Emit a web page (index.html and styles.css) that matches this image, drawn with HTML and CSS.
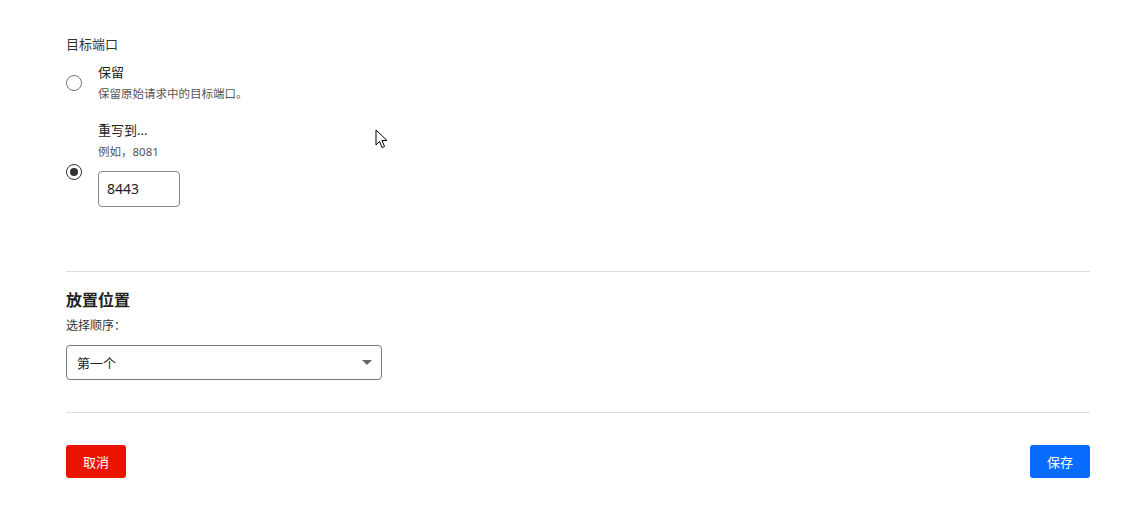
FILE: index.html
```html
<!DOCTYPE html>
<html>
<head>
  <meta charset="utf-8">
  <meta name="viewport" content="width=device-width">
  <link rel="stylesheet" href="styles.css">
  <title>目标端口</title>
</head>
<body>
  <div class="page">
    <div class="field-label">目标端口</div>

    <div class="option">
      <span class="radio"></span>
      <div class="option-body">
        <div class="option-title">保留</div>
        <div class="option-desc">保留原始请求中的目标端口。</div>
      </div>
    </div>

    <div class="option option-second">
      <span class="radio checked"></span>
      <div class="option-body">
        <div class="option-title">重写到...</div>
        <div class="option-desc">例如，8081</div>
        <div class="port-input">8443</div>
      </div>
    </div>

    <hr class="divider first">

    <div class="section-title">放置位置</div>
    <div class="select-label">选择顺序：</div>
    <div class="select">
      <span>第一个</span>
      <span class="caret"></span>
    </div>

    <hr class="divider second">

    <div class="actions">
      <button class="btn btn-cancel">取消</button>
      <button class="btn btn-save">保存</button>
    </div>
  </div>

  <svg class="cursor" width="14" height="22" viewBox="0 0 14 22">
    <path d="M1 1 L1 16 L4.5 12.5 L7 18.5 L9.5 17.5 L7 11.5 L12 11.5 Z" fill="#fff" stroke="#000" stroke-width="1" stroke-linejoin="round"/>
  </svg>
</body>
</html>
```

FILE: styles.css
```css
body {
  margin: 0;
  background: #fff;
  color: #333;
  font-family: "Noto Sans", "Noto Sans CJK SC", sans-serif;
}
.page {
  width: 1024px;
  margin-left: 66px;
  padding-top: 35px;
}
.field-label {
  font-size: 13px;
  line-height: 18px;
}
.option {
  display: flex;
  align-items: center;
  margin-top: 10px;
}
.option-second {
  margin-top: 18px;
}
.radio {
  width: 14px;
  height: 14px;
  border: 1px solid #767676;
  border-radius: 50%;
  margin-right: 16px;
  flex: none;
  position: relative;
}
.radio.checked {
  border-color: #333;
  margin-top: 15px;
}
.radio.checked::after {
  content: "";
  position: absolute;
  left: 3px;
  top: 3px;
  width: 8px;
  height: 8px;
  border-radius: 50%;
  background: #333;
}
.option-title {
  font-size: 13px;
  line-height: 18px;
  color: #222;
}
.option-desc {
  font-size: 11.5px;
  line-height: 18px;
  margin-top: 4px;
  color: #555;
}
.port-input {
  width: 72px;
  height: 34px;
  border: 1px solid #888;
  border-radius: 4px;
  margin-top: 10px;
  padding-left: 8px;
  font-size: 14px;
  line-height: 34px;
  color: #222;
}
.divider {
  border: 0;
  border-top: 1px solid #ddd;
  margin: 0;
}
.divider.first {
  margin-top: 64px;
}
.section-title {
  margin-top: 17px;
  font-size: 16px;
  font-weight: bold;
  line-height: 22px;
  color: #222;
}
.select-label {
  margin-top: 6px;
  font-size: 12px;
  line-height: 18px;
}
.select {
  margin-top: 10px;
  height: 33px;
  border: 1px solid #777;
  border-radius: 4px;
  display: flex;
  align-items: center;
  justify-content: space-between;
  padding: 0 9px 0 10px;
  width: 295px;
  font-size: 13px;
  color: #222;
}
.caret {
  width: 0;
  height: 0;
  border-left: 5px solid transparent;
  border-right: 5px solid transparent;
  border-top: 5px solid #666;
}
.divider.second {
  margin-top: 32px;
}
.actions {
  display: flex;
  justify-content: space-between;
  margin-top: 32px;
}
.btn {
  height: 33px;
  width: 60px;
  border: 0;
  border-radius: 3px;
  color: #fff;
  font-family: "Noto Sans", "Noto Sans CJK SC", sans-serif;
  font-size: 13px;
}
.btn-cancel {
  background: #eb1400;
}
.btn-save {
  background: #0a6cff;
}
.cursor {
  position: absolute;
  left: 375px;
  top: 129px;
}
```
